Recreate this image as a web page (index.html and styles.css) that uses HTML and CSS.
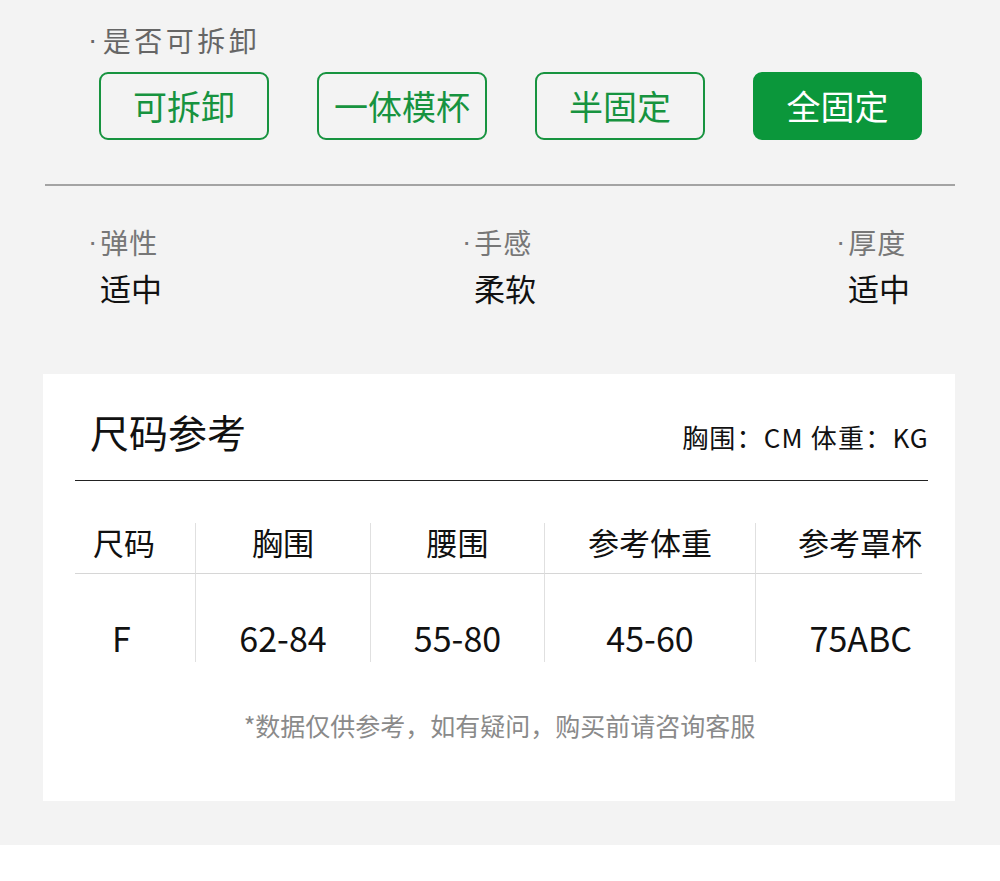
FILE: index.html
```html
<!DOCTYPE html>
<html lang="zh">
<head>
<meta charset="utf-8">
<link rel="stylesheet" href="styles.css">
</head>
<body>
<div class="page">
  <section class="opts">
    <div class="label"><span class="dot">·</span>是否可拆卸</div>
    <div class="btns">
      <div class="btn">可拆卸</div>
      <div class="btn">一体模杯</div>
      <div class="btn">半固定</div>
      <div class="btn on">全固定</div>
    </div>
  </section>
  <hr class="divider">
  <section class="props">
    <div class="prop"><div class="pl"><span class="dot">·</span>弹性</div><div class="pv">适中</div></div>
    <div class="prop"><div class="pl"><span class="dot">·</span>手感</div><div class="pv">柔软</div></div>
    <div class="prop"><div class="pl"><span class="dot">·</span>厚度</div><div class="pv">适中</div></div>
  </section>
  <section class="card">
    <div class="card-head">
      <div class="title">尺码参考</div>
      <div class="units">胸围：CM 体重：KG</div>
    </div>
    <div class="table">
      <div class="c h c1">尺码</div>
      <div class="c h">胸围</div>
      <div class="c h">腰围</div>
      <div class="c h">参考体重</div>
      <div class="c h c5">参考罩杯</div>
      <div class="c d c1">F</div>
      <div class="c d">62-84</div>
      <div class="c d">55-80</div>
      <div class="c d">45-60</div>
      <div class="c d c5">75ABC</div>
    </div>
    <div class="note">*数据仅供参考，如有疑问，购买前请咨询客服</div>
  </section>
</div>
</body>
</html>
```

FILE: styles.css
```css
* { box-sizing: border-box; }
html, body { margin: 0; padding: 0; background: #fff; }
body { font-family: "Noto Sans CJK SC", "Noto Sans", sans-serif; }
.dot {
  font-family: "Liberation Sans", sans-serif;
  padding-right: 2px;
  position: relative;
  top: -3px;
}
.page {
  background: #f3f3f3;
  height: 845px;
  padding-top: 22px;
}
.opts { padding: 0 0 0 88px; }
.label {
  color: #666;
  font-size: 28px;
  letter-spacing: 3.5px;
  line-height: 36px;
  height: 36px;
}
.btns {
  display: flex;
  gap: 48px;
  margin-top: 14px;
  padding-left: 11px;
}
.btn {
  width: 170px;
  height: 68px;
  border: 2px solid #17933f;
  border-radius: 9px;
  color: #17933f;
  font-size: 34px;
  display: flex;
  align-items: center;
  justify-content: center;
  line-height: 1;
}
.btn.on {
  background: #0b973b;
  border-color: #0b973b;
  color: #fff;
  width: 169px;
}
.divider {
  margin: 44px 45px 0 45px;
  border: 0;
  height: 2px;
  background: #a3a3a3;
}
.props {
  display: flex;
  justify-content: space-between;
  padding: 38px 90px 0 88px;
  height: 188px;
}
.prop { display: flex; flex-direction: column; }
.pl { color: #777; font-size: 28px; line-height: 36px; letter-spacing: 1px; }
.pv { color: #111; font-size: 31px; line-height: 40px; margin-top: 5px; padding-left: 12px; }
.card {
  background: #fff;
  margin: 0 45px 0 43px;
  height: 427px;
  padding: 0 27px 0 32px;
}
.card-head {
  display: flex;
  justify-content: space-between;
  align-items: flex-end;
  height: 107px;
  border-bottom: 1.5px solid #222;
  padding: 0 0 28px 15px;
}
.title { font-size: 39px; line-height: 48px; color: #111; margin-bottom: -3px; }
.units { font-size: 26px; line-height: 30px; color: #111; letter-spacing: 1.2px; margin-right: -1px; }
.table {
  display: grid;
  grid-template-columns: 120px 175px 174px 211px 167px;
  margin-top: 42px;
}
.c {
  display: flex;
  align-items: center;
  justify-content: center;
  color: #111;
  border-left: 1px solid #e0e0e0;
}
.c.c1 { border-left: 0; justify-content: flex-start; }
.c.h {
  height: 51px;
  font-size: 31px;
  border-bottom: 1px solid #d6d6d6;
  padding-bottom: 14px;
}
.c.h.c1 { padding-left: 18px; }
.c.d {
  height: 88px;
  font-size: 34px;
  padding-top: 48px;
  padding-bottom: 10px;
}
.c.d.c1 { padding-left: 37px; }
.c.c5 { justify-content: flex-end; padding-right: 10px; }
.c.h.c5 { padding-right: 0; }
.note {
  text-align: center;
  color: #8a8a8a;
  font-size: 25px;
  margin-top: 45px;
  padding-right: 4px;
}
```
